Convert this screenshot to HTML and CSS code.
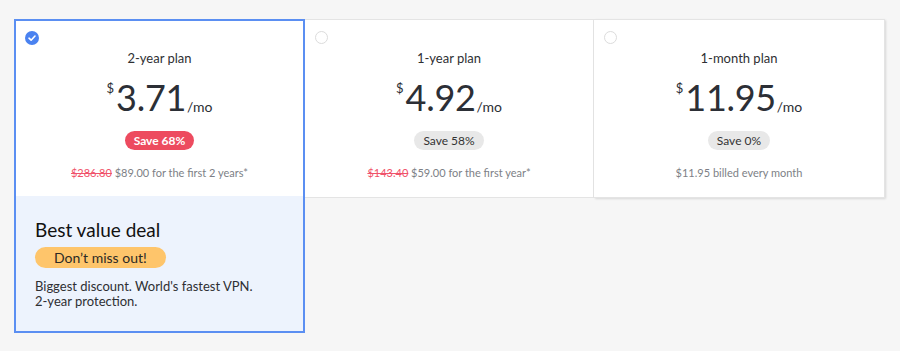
FILE: index.html
```html
<!DOCTYPE html>
<html>
<head>
<meta charset="utf-8">
<link rel="stylesheet" href="styles.css">
</head>
<body>
<div class="plans">
  <div class="plan plan--active">
    <div class="plan-top">
      <span class="radio radio--on">
        <svg viewBox="0 0 14 14" width="14" height="14"><circle cx="7" cy="7" r="7" fill="#4a82f0"/><path d="M4 7.2 L6.1 9.2 L10 5" fill="none" stroke="#fff" stroke-width="1.6" stroke-linecap="round" stroke-linejoin="round"/></svg>
      </span>
      <div class="plan-name">2-year plan</div>
      <div class="price"><span class="cur">$</span><span class="amount">3.71</span><span class="per">/mo</span></div>
      <span class="save save--hot">Save 68%</span>
      <div class="billing"><s class="old">$286.80</s> $89.00 for the first 2 years*</div>
    </div>
    <div class="deal">
      <div class="deal-title">Best value deal</div>
      <span class="deal-pill">Don’t miss out!</span>
      <p class="deal-text">Biggest discount. World's fastest VPN.<br>2-year protection.</p>
    </div>
  </div>
  <div class="plan">
    <div class="plan-top">
      <span class="radio"></span>
      <div class="plan-name">1-year plan</div>
      <div class="price"><span class="cur">$</span><span class="amount">4.92</span><span class="per">/mo</span></div>
      <span class="save">Save 58%</span>
      <div class="billing"><s class="old">$143.40</s> $59.00 for the first year*</div>
    </div>
  </div>
  <div class="plan plan--last">
    <div class="plan-top">
      <span class="radio"></span>
      <div class="plan-name">1-month plan</div>
      <div class="price"><span class="cur">$</span><span class="amount">11.95</span><span class="per">/mo</span></div>
      <span class="save">Save 0%</span>
      <div class="billing">$11.95 billed every month</div>
    </div>
  </div>
</div>
</body>
</html>
```
FILE: styles.css
```css
* { box-sizing: border-box; }
body {
  margin: 0;
  background: #f6f6f6;
  font-family: Lato, "Noto Sans", sans-serif;
  color: #2b2e34;
}
.plans {
  display: grid;
  grid-template-columns: 291px 289px 291px;
  align-items: start;
  padding: 19px 0 0 14px;
}
.plan {
  background: #fff;
  border: 1px solid #e4e4e4;
  border-left: none;
}
.plan--last {
  box-shadow: 1px 1px 2px rgba(0,0,0,0.12);
}
.plan--active {
  border: 2px solid #5b8ff2;
  position: relative;
  z-index: 1;
}
.plan-top {
  position: relative;
  height: 177px;
  display: flex;
  flex-direction: column;
  align-items: center;
  padding-top: 30px;
}
.plan--active .plan-top { height: 175px; padding-top: 29px; }
.radio {
  position: absolute;
  left: 10px;
  top: 11px;
  width: 13px;
  height: 13px;
  border-radius: 50%;
  border: 1px solid #dcdcdc;
  background: #fff;
}
.radio--on {
  border: none;
  width: 14px;
  height: 14px;
  left: 9px;
  top: 10px;
}
.radio--on svg { display: block; }
.plan-name {
  font-size: 13px;
  line-height: 16px;
  color: #2e2f33;
}
.price {
  display: flex;
  align-items: flex-start;
  margin-top: 8px;
  height: 46px;
}
.cur {
  font-size: 13px;
  margin-top: 6px;
  margin-right: 2px;
}
.amount {
  font-size: 36px;
  line-height: 46px;
  letter-spacing: -0.3px;
  color: #2c2f36;
}
.per {
  font-size: 14px;
  margin-top: 24px;
  margin-left: 1px;
}
.save {
  margin-top: 11px;
  height: 19px;
  line-height: 19px;
  padding: 0 9px;
  border-radius: 10px;
  background: #e8e8e8;
  font-size: 12px;
  color: #333;
}
.save--hot {
  background: #ed4b5f;
  color: #fff;
  font-weight: bold;
}
.billing {
  margin-top: 16px;
  font-size: 11px;
  color: #7d7f86;
}
.old { color: #f0526a; }
.deal {
  background: #edf3fd;
  height: 135px;
  padding: 23px 19px 0;
}
.deal-title {
  font-size: 19px;
  line-height: 22px;
  color: #111;
}
.deal-pill {
  display: inline-block;
  margin-top: 6px;
  height: 21px;
  line-height: 21px;
  padding: 0 19px;
  border-radius: 11px;
  background: #fec56b;
  font-size: 14px;
  color: #2c2a26;
}
.deal-text {
  margin: 11px 0 0;
  font-size: 13px;
  line-height: 15px;
  color: #2e2f33;
}
```
